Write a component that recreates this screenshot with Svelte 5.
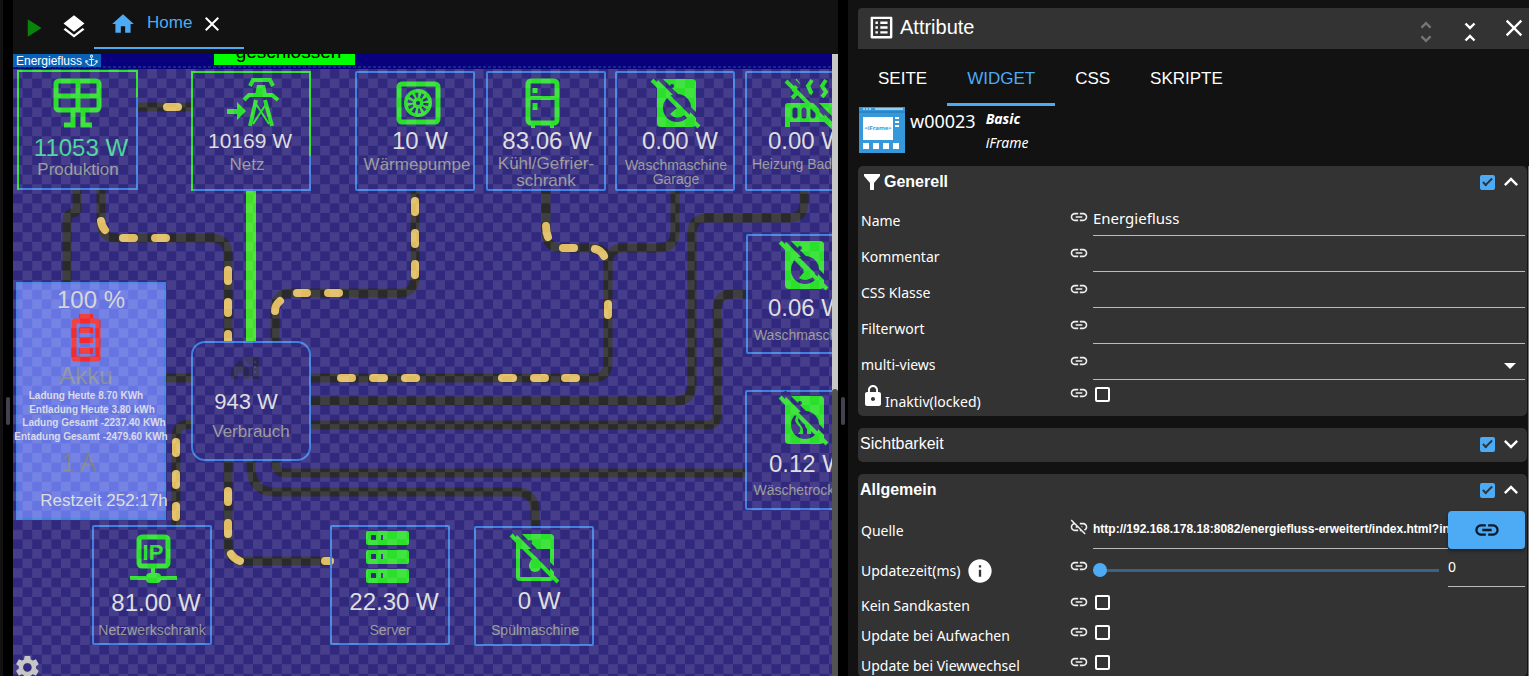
<script>
  let name = 'Energiefluss';
  let source = 'http://192.168.178.18:8082/energiefluss-erweitert/index.html?instance=0';
  let interval = 0;

  const tabs = ['SEITE', 'WIDGET', 'CSS', 'SKRIPTE'];
  let activeTab = 'WIDGET';

  // dark pipes between the nodes
  const wires = [
    'M137 107H192',
    'M77 189V206Q77 213 72 213Q67 214 67 221V284',
    'M101 189V222Q101 238 117 238H211Q228 238 228 255V342',
    'M415 190V277Q415 293 399 293H291Q275 293 275 309V342',
    'M546 190V232Q546 248 562 248H592Q608 248 608 264V362Q608 378 592 378H310',
    'M675 190V232Q675 248 659 248H624Q608 248 608 264',
    'M804 190V203Q804 218 789 218H707Q692 218 692 233V385Q692 401 676 401H310',
    'M747 294H732Q717 294 717 310V415Q717 425 707 425H310',
    'M746 473H286Q275 473 275 460',
    'M251 460V466Q251 492 275 492H517Q535 492 535 512V527',
    'M228 460V545Q228 561 244 561H331',
    'M192 424H190Q176 424 176 438V526',
    'M165 378H192'
  ];

  const pulses = [
    'M167 107H178',
    'M101 221Q102 227 105 230', 'M123 238H134', 'M155 238H166',
    'M228 270V281', 'M228 302V313', 'M228 334V340',
    'M415 201V212', 'M415 233V244', 'M415 264V275', 'M339 293H328', 'M307 293H297', 'M280 301Q275 305 275 311',
    'M546 226Q546 232 548 237', 'M563 248H574', 'M595 249Q601 250 604 256', 'M608 304V315',
    'M341 378H352', 'M373 378H384', 'M405 378H416', 'M502 378H513', 'M534 378H545', 'M565 378H576',
    'M176 442V453', 'M176 474V485', 'M176 506V517',
    'M228 491V502', 'M228 523V534', 'M231 554Q234 559 240 561', 'M325 561H330'
  ];

  const boxes = [
    { x: 356, y: 72 }, { x: 487, y: 72 }, { x: 616, y: 72 }, { x: 746, y: 72 },
    { x: 747, y: 235 }, { x: 746, y: 391 },
    { x: 93, y: 526 }, { x: 331, y: 526 }, { x: 475, y: 527 }
  ];

  const texts = [
    { t: '11053 W', x: 81, y: 156, s: 24, c: '#48d39a' },
    { t: 'Produktion', x: 78, y: 175, s: 17, c: '#979797' },
    { t: '10169 W', x: 250, y: 148, s: 21, c: '#dcdcdc' },
    { t: 'Netz', x: 247, y: 170, s: 17, c: '#979797' },
    { t: '10 W', x: 420, y: 149, s: 24, c: '#dcdcdc' },
    { t: 'Wärmepumpe', x: 417, y: 170, s: 17, c: '#979797' },
    { t: '83.06 W', x: 547, y: 149, s: 24, c: '#dcdcdc' },
    { t: 'Kühl/Gefrier-', x: 546, y: 169, s: 17, c: '#979797' },
    { t: 'schrank', x: 546, y: 186, s: 17, c: '#979797' },
    { t: '0.00 W', x: 680, y: 149, s: 24, c: '#dcdcdc' },
    { t: 'Waschmaschine', x: 676, y: 170, s: 14, c: '#979797' },
    { t: 'Garage', x: 676, y: 184, s: 14, c: '#979797' },
    { t: '0.00 W', x: 806, y: 149, s: 24, c: '#dcdcdc' },
    { t: 'Heizung Bad', x: 792, y: 169, s: 14, c: '#979797' },
    { t: '0.06 W', x: 806, y: 316, s: 24, c: '#dcdcdc' },
    { t: 'Waschmaschine', x: 805, y: 340, s: 14, c: '#979797' },
    { t: '0.12 W', x: 807, y: 472, s: 24, c: '#dcdcdc' },
    { t: 'Wäschetrockner', x: 804, y: 495, s: 14, c: '#979797' },
    { t: '100 %', x: 91, y: 308, s: 24, c: '#d4d4d4' },
    { t: 'Akku', x: 86, y: 384, s: 24, c: '#8a8f9c' },
    { t: '1 A', x: 79, y: 471, s: 24, c: '#7d828f' },
    { t: 'Restzeit 252:17h', x: 104, y: 506, s: 17, c: '#dcdcdc' },
    { t: '943 W', x: 246, y: 409, s: 22, c: '#dcdcdc' },
    { t: 'Verbrauch', x: 251, y: 437, s: 17, c: '#979797' },
    { t: '81.00 W', x: 156, y: 611, s: 24, c: '#dcdcdc' },
    { t: 'Netzwerkschrank', x: 152, y: 635, s: 14, c: '#979797' },
    { t: '22.30 W', x: 394, y: 610, s: 24, c: '#dcdcdc' },
    { t: 'Server', x: 390, y: 635, s: 14, c: '#979797' },
    { t: '0 W', x: 539, y: 609, s: 24, c: '#dcdcdc' },
    { t: 'Spülmaschine', x: 535, y: 635, s: 14, c: '#979797' }
  ];

  const counters = [
    { t: 'Ladung Heute 8.70 KWh', x: 86, y: 399 },
    { t: 'Entladung Heute 3.80 kWh', x: 92, y: 413 },
    { t: 'Ladung Gesamt -2237.40 KWh', x: 94, y: 426 },
    { t: 'Entadung Gesamt -2479.60 KWh', x: 91, y: 440 }
  ];

  const flags = ['Kein Sandkasten', 'Update bei Aufwachen', 'Update bei Viewwechsel'];
</script>

{#snippet link(off)}
  <svg class="link" viewBox="0 0 24 24" aria-hidden="true">
    {#if off}
      <path d="M14.400 11l1.600 1.600V11zM17 7h-4v1.900h4c1.710 0 3.100 1.390 3.100 3.100 0 1.430-.980 2.630-2.310 2.980l1.460 1.460C20.880 15.610 22 13.950 22 12c0-2.760-2.240-5-5-5zM2 4.270l3.110 3.110C3.290 8.120 2 9.910 2 12c0 2.760 2.240 5 5 5h4v-1.900H7c-1.710 0-3.100-1.390-3.100-3.100 0-1.590 1.210-2.900 2.760-3.070L8.730 11H8v2h2.730L13 15.270V17h1.730l4.010 4L20 19.740 3.270 3z" />
    {:else}
      <path d="M3.900 12c0-1.710 1.390-3.100 3.100-3.100h4V7H7c-2.760 0-5 2.240-5 5s2.240 5 5 5h4v-1.900H7c-1.710 0-3.100-1.390-3.100-3.100zM8 13h8v-2H8v2zm9-6h-4v1.900h4c1.710 0 3.100 1.390 3.100 3.100s-1.390 3.100-3.100 3.100h-4V17h4c2.760 0 5-2.240 5-5s-2.240-5-5-5z" />
    {/if}
  </svg>
{/snippet}

{#snippet chevron(up)}
  <svg class="chevron" viewBox="0 0 24 24" aria-hidden="true">
    <path d={up ? 'm12 8-6 6 1.410 1.410L12 10.830l4.590 4.580L18 14z' : 'M16.590 8.590 12 13.170 7.410 8.590 6 10l6 6 6-6z'} />
  </svg>
{/snippet}

{#snippet washer(x, y, kind)}
  <g transform="translate({x} {y})">
    <rect x="5" width="39" height="48" rx="4" fill="#2be02b" />
    <circle cx="20" cy="7" r="2" class="hole" />
    <circle cx="25" cy="29" r="14" class="hole" />
    {#if kind === 'dryer'}
      <path d="M17 19Q13 25 18 29T18 38H23Q24 33 20 28T20 21ZM25 25Q24 30 27 33V38H31Q32 33 29 30Z" fill="#2be02b" />
    {:else if kind === 'pie'}
      <path d="M13 20L24 31L19 37Q26 42 34 35L35 32L20 17Z" fill="#2be02b" />
      <path d="M14 19L24 29L17 35Q10 28 14 19Z" class="hole" />
    {:else}
      <path d="M15 19L25 29L18 35Q25 42 34 35L20 21Z" fill="#2be02b" />
      <path d="M14 20L23 29L16 35Z" class="hole" />
    {/if}
    <path d="M4 -4L46 38" class="gap" />
    <path d="M0 1L47 48" class="slash" />
  </g>
{/snippet}

<div class="app">
  <div class="edge"></div>
  <div class="splitter"><span></span></div>

  <main class="editor">
    <header class="toolbar">
      <button class="icon-btn play" aria-label="Start">
        <svg viewBox="0 0 24 24" width="30" height="30"><path d="M7 5v14l11-7z" fill="#0a830a" /></svg>
      </button>
      <button class="icon-btn layers" aria-label="Ansichten">
        <svg viewBox="0 0 24 24" width="28" height="28"><path fill="#fff" d="m11.990 18.540-7.370-5.730L3 14.070l9 7 9-7-1.630-1.270zM12 16l7.360-5.730L21 9l-9-7-9 7 1.630 1.270z" /></svg>
      </button>
      <div class="view-tab">
        <svg viewBox="0 0 24 24" width="26" height="26"><path fill="#4dabf5" d="M10 20v-6h4v6h5v-8h3L12 3 2 12h3v8z" /></svg>
        <a href="#home">Home</a>
        <button class="icon-btn" aria-label="Home schließen">
          <svg viewBox="0 0 24 24" width="24" height="24"><path fill="#fff" d="M19 6.410 17.590 5 12 10.590 6.410 5 5 6.410 10.590 12 5 17.590 6.410 19 12 13.410 17.590 19 19 17.590 13.410 12z" /></svg>
        </button>
      </div>
    </header>

    <div class="work">
      <div class="stage">
        <svg class="flow" width="840" height="622">
          <defs>
            <pattern id="checker" width="16" height="16" patternUnits="userSpaceOnUse" patternTransform="translate(13 69) scale(1.2)">
              <rect width="8" height="8" fill="#fff" />
              <rect x="8" y="8" width="8" height="8" fill="#fff" />
            </pattern>
          </defs>
          <g transform="translate(-13 -54)">
            <rect x="13" y="69" width="840" height="620" class="hole" />

            {#each wires as d}
              <path {d} class="wire" />
            {/each}
            {#each pulses as d}
              <path {d} class="pulse" />
            {/each}
            <path d="M251 190V342" stroke="#42e028" stroke-width="10" />

            {#each boxes as b}
              <rect x={b.x} y={b.y} width="118" height="118" rx="1" class="box" />
            {/each}
            <rect x="18" y="71" width="119" height="118" class="box" />
            <path d="M18 190V71H137V97" class="box-live" />
            <rect x="192" y="72" width="118" height="118" class="box" />
            <path d="M192 191V72H310V156" class="box-live" />
            <rect x="192" y="342" width="118" height="118" rx="13" class="box center" />
            <rect x="17" y="283" width="148" height="236" class="box akku" />

            <!-- Produktion -->
            <g fill="none" stroke="#2be02b" stroke-width="5">
              <rect x="56" y="81" width="43" height="29" rx="3" />
              <path d="M78 80V110M56 96H99M73 110V125H64M83 110V125H92" />
            </g>

            <!-- Netz -->
            <path d="M227 109H237V102L246 111L237 120V114H227Z" fill="#2be02b" />
            <g fill="none" stroke="#2be02b" stroke-width="4">
              <path d="M250 86L253 80H270L273 86M244 100L249 95H272L278 100" />
              <path d="M256 100L250 126M265 100L272 126" />
              <path d="M256 104L269 124M266 104L253 124" stroke-width="2" />
            </g>
            <path d="M257 85H265L267 95H255Z" fill="#2be02b" />

            <!-- Wärmepumpe -->
            <rect x="399" y="84" width="39" height="38" rx="3" fill="none" stroke="#2be02b" stroke-width="5" />
            <circle cx="418" cy="103" r="14" fill="#2be02b" />
            <circle cx="418" cy="103" r="8" fill="none" stroke="#31297e" stroke-width="5" stroke-dasharray="2.500 2.530" />
            <circle cx="418" cy="103" r="2" class="hole" />

            <!-- Kühlschrank -->
            <g fill="none" stroke="#2be02b" stroke-width="4">
              <rect x="528" y="81" width="29" height="42" rx="3" stroke-width="5" />
              <path d="M528 98H557M531 126H535M550 126H554" />
              <path d="M535 88V93M535 103V110" stroke-width="5" />
            </g>

            {@render washer(652, 79, 'water')}
            {@render washer(780, 241, 'pie')}
            {@render washer(780, 396, 'dryer')}

            <!-- Heizung -->
            <path d="M785 127V106Q785 103 788 103H836V127H829V122H790V127Z" fill="#2be02b" />
            <path d="M795 110V116M804 110V116M813 110V116M822 110V116" stroke="#31297e" stroke-width="5" stroke-linecap="round" />
            <path d="M795 80L798 84L794 90L797 93L792 98M812 80L808 86L811 92L808 97M826 80L822 86L826 92L822 97" fill="none" stroke="#2be02b" stroke-width="4" />
            <path d="M790 77L838 125" class="gap" />
            <path d="M786 81L834 129" class="slash" />

            <!-- Akku -->
            <g stroke="#f02c2c" fill="none">
              <rect x="74" y="321" width="24" height="38" rx="1" stroke-width="5" />
              <path d="M79 317H93" stroke-width="6" />
              <path d="M79 330H93M79 340H93M79 351H93" stroke-width="6" />
            </g>

            <!-- Verbrauch -->
            <path fill="#2a2650" d="M231 379V370L240 360L249 369V379H243V373H238V379ZM244 357H259V379H252V367L244 360Z" />
            <path d="M255 361V375" stroke="#3a3380" stroke-width="2" stroke-dasharray="2 3" />

            <!-- Netzwerkschrank -->
            <rect x="139" y="537" width="29" height="29" rx="3" fill="none" stroke="#2be02b" stroke-width="5" />
            <text x="153" y="560" class="ip">IP</text>
            <path d="M130 578H177M153 567V574" stroke="#2be02b" stroke-width="4" />
            <rect x="146" y="573" width="15" height="10" rx="4" fill="#2be02b" />

            <!-- Server -->
            {#each [531, 550, 569] as y}
              <rect x="366" {y} width="43" height="14" rx="2" fill="#2be02b" />
              <rect x="371" y={y + 4} width="5" height="5" class="hole" />
              <rect x="381" y={y + 4} width="2" height="5" class="hole" />
            {/each}

            <!-- Spülmaschine -->
            <rect x="518" y="536" width="34" height="43" rx="2" fill="none" stroke="#2be02b" stroke-width="4" />
            <path d="M517 536H553V549H517Z" fill="#2be02b" />
            <circle cx="530" cy="542" r="2" class="hole" />
            <path d="M535 556Q541 561 541 566A6 6 0 0 1 529 566Q529 561 535 556Z" fill="#2be02b" />
            <path d="M515 530L558 573" class="gap" />
            <path d="M511 535L558 582" class="slash" />

            {#each texts as t}
              <text x={t.x} y={t.y} font-size={t.s} fill={t.c}>{t.t}</text>
            {/each}
            {#each counters as c}
              <text x={c.x} y={c.y} class="counter">{c.t}</text>
            {/each}

            <rect x="13" y="69" width="840" height="620" fill="url(#checker)" opacity="0.1" />
            <path d="M13 67H853" stroke="#22509c" stroke-dasharray="3 2" />

            <!-- settings -->
            <path transform="translate(13 653) scale(1.2)" fill="#c6c6c6" d="M19.140 12.940c.040-.300.060-.610.060-.940 0-.320-.020-.640-.070-.940l2.030-1.580c.180-.140.230-.410.120-.610l-1.920-3.320c-.120-.220-.370-.290-.590-.220l-2.390.960c-.500-.380-1.030-.700-1.620-.940l-.360-2.540c-.040-.240-.240-.410-.480-.410h-3.840c-.240 0-.430.170-.470.410l-.360 2.540c-.590.240-1.130.570-1.620.940l-2.390-.960c-.220-.080-.470 0-.590.220L2.740 8.870c-.120.210-.080.470.120.610l2.030 1.580c-.050.300-.090.630-.090.940s.020.640.070.940l-2.030 1.580c-.180.140-.230.410-.120.610l1.920 3.320c.120.220.370.290.590.220l2.390-.960c.500.380 1.030.700 1.620.940l.360 2.540c.050.240.240.410.480.410h3.840c.240 0 .440-.170.470-.410l.360-2.540c.590-.240 1.130-.560 1.620-.940l2.390.960c.220.080.470 0 .590-.220l1.920-3.320c.120-.220.070-.470-.120-.610zM12 15.600c-1.980 0-3.600-1.620-3.600-3.600s1.620-3.600 3.600-3.600 3.600 1.620 3.600 3.600-1.620 3.600-3.600 3.600z" />
          </g>
        </svg>
        <div class="status"><span>geschlossen</span></div>
        <div class="widget-name">
          Energiefluss
          <svg viewBox="0 0 24 24" width="13" height="13" fill="none" stroke="#cfe6ff" stroke-width="2"><circle cx="12" cy="4" r="2" /><path d="M12 6V21M7 10H17M2 13Q4 21 12 21T22 13M1 16L2 12L6 14M23 16L22 12L18 14" /></svg>
        </div>
      </div>
      <div class="scroll"><div class="thumb"></div></div>
    </div>
  </main>

  <div class="splitter"><span></span></div>

  <aside class="panel">
    <header class="panel-head">
      <svg viewBox="0 0 24 24" width="29" height="29"><path fill="#fff" d="M19 5v14H5V5h14m1.100-2H3.900c-.500 0-.900.400-.900.900v16.200c0 .400.400.900.900.900h16.200c.400 0 .900-.500.900-.900V3.900c0-.500-.500-.900-.900-.900zM11 7h6v2h-6V7zm0 4h6v2h-6v-2zm0 4h6v2h-6zM7 7h2v2H7zm0 4h2v2H7zm0 4h2v2H7z" /></svg>
      <h1>Attribute</h1>
      <button class="icon-btn fold" aria-label="Alle öffnen" disabled>
        <svg viewBox="0 0 24 24" width="28" height="28"><path fill="#777" d="M12 5.830 15.170 9l1.410-1.410L12 3 7.410 7.590 8.830 9zm0 12.340L8.830 15l-1.410 1.410L12 21l4.590-4.590L15.170 15z" /></svg>
      </button>
      <button class="icon-btn fold" aria-label="Alle schließen">
        <svg viewBox="0 0 24 24" width="28" height="28"><path fill="#fff" d="M7.410 18.590 8.830 20 12 16.830 15.170 20l1.410-1.410L12 14zm9.180-13.180L15.170 4 12 7.170 8.830 4 7.410 5.410 12 10z" /></svg>
      </button>
      <button class="icon-btn" aria-label="Schließen">
        <svg viewBox="0 0 24 24" width="28" height="28"><path fill="#fff" d="M19 6.410 17.590 5 12 10.590 6.410 5 5 6.410 10.590 12 5 17.590 6.410 19 12 13.410 17.590 19 19 17.590 13.410 12z" /></svg>
      </button>
    </header>

    <nav class="tabs">
      {#each tabs as tab}
        <button class:active={tab === activeTab} on:click={() => (activeTab = tab)}>{tab}</button>
      {/each}
    </nav>

    <div class="widget-info">
      <svg viewBox="0 0 46 46" width="46" height="46">
        <rect width="46" height="46" fill="#3498db" />
        <path d="M0 5H46" stroke="#2474a8" />
        <path d="M4 2H12" stroke="#fff" stroke-dasharray="2 1" />
        <path d="M16 2H44" stroke="#fff" stroke-width="1" />
        <rect x="4" y="10" width="30" height="23" fill="#fff" />
        <text x="19" y="23" text-anchor="middle" font-size="6" font-weight="700" fill="#3498db">&lt;iFrame&gt;</text>
        <path d="M36 11H40M36 15H40M36 19H40" stroke="#fff" stroke-width="2" />
        <path d="M4 39H42" stroke="#fff" stroke-width="6" stroke-dasharray="6 4" />
      </svg>
      <span class="wid">w00023</span>
      <div class="wtype"><b>Basic</b><span>iFrame</span></div>
    </div>

    <div class="sections">
      <section>
        <div class="head">
          <svg viewBox="0 0 16 16" width="16" height="16"><path d="M0 0H16V2L10 9V16H6V9L0 2Z" fill="#fff" /></svg>
          <h2>Generell</h2>
          <input type="checkbox" aria-label="Generell" checked />
          <button class="icon-btn" aria-label="Zuklappen">{@render chevron(true)}</button>
        </div>
        <div class="row">
          <label for="name">Name</label>
          {@render link(false)}
          <input id="name" type="text" bind:value={name} />
        </div>
        <div class="row">
          <label for="comment">Kommentar</label>
          {@render link(false)}
          <input id="comment" type="text" />
        </div>
        <div class="row">
          <label for="css">CSS Klasse</label>
          {@render link(false)}
          <input id="css" type="text" />
        </div>
        <div class="row">
          <label for="filter">Filterwort</label>
          {@render link(false)}
          <input id="filter" type="text" />
        </div>
        <div class="row">
          <label for="views">multi-views</label>
          {@render link(false)}
          <div class="select">
            <select id="views"><option></option></select>
            <svg viewBox="0 0 12 6" width="12" height="6"><path d="M0 0H12L6 6Z" fill="#fff" /></svg>
          </div>
        </div>
        <div class="row check locked">
          <label for="locked">
            <svg viewBox="0 0 24 24" width="24" height="24"><path fill="#fff" d="M18 8h-1V6c0-2.760-2.240-5-5-5S7 3.240 7 6v2H6c-1.100 0-2 .900-2 2v10c0 1.100.900 2 2 2h12c1.100 0 2-.900 2-2V10c0-1.100-.900-2-2-2zm-6 9c-1.100 0-2-.900-2-2s.900-2 2-2 2 .900 2 2-.900 2-2 2zm3.100-9H8.900V6c0-1.710 1.390-3.100 3.100-3.100s3.100 1.390 3.100 3.100z" /></svg>
            <span>Inaktiv(locked)</span>
          </label>
          {@render link(false)}
          <input id="locked" type="checkbox" />
        </div>
      </section>

      <section>
        <div class="head">
          <h2 class="closed">Sichtbarkeit</h2>
          <input type="checkbox" aria-label="Sichtbarkeit" checked />
          <button class="icon-btn" aria-label="Aufklappen">{@render chevron(false)}</button>
        </div>
      </section>

      <section>
        <div class="head">
          <h2>Allgemein</h2>
          <input type="checkbox" aria-label="Allgemein" checked />
          <button class="icon-btn" aria-label="Zuklappen">{@render chevron(true)}</button>
        </div>
        <div class="row source">
          <label for="source">Quelle</label>
          {@render link(true)}
          <input id="source" type="text" bind:value={source} />
          <button class="pick" aria-label="Quelle wählen">{@render link(false)}</button>
        </div>
        <div class="row time">
          <label for="interval">
            Updatezeit(ms)
            <svg viewBox="0 0 24 24" width="28" height="28"><path fill="#fff" d="M12 2C6.480 2 2 6.480 2 12s4.480 10 10 10 10-4.480 10-10S17.520 2 12 2zm1 15h-2v-6h2zm0-8h-2V7h2z" /></svg>
          </label>
          {@render link(false)}
          <input id="interval" type="range" min="0" max="60000" bind:value={interval} />
          <input class="num" type="text" aria-label="Updatezeit" bind:value={interval} />
        </div>
        {#each flags as flag, i}
          <div class="row check">
            <label for="flag{i}">{flag}</label>
            {@render link(false)}
            <input id="flag{i}" type="checkbox" />
          </div>
        {/each}
      </section>
    </div>
  </aside>
</div>

<style>
  :global(body) {
    margin: 0;
    background: #121212;
  }
  .app {
    display: flex;
    height: 100vh;
    overflow: hidden;
    color: #fff;
    font-family: 'Liberation Sans', Arial, sans-serif;
  }
  .edge {
    width: 3px;
    background: #121212;
  }
  .splitter {
    width: 10px;
    flex-shrink: 0;
    display: flex;
    justify-content: center;
    padding-top: 397px;
    box-sizing: border-box;
    background: #000;
  }
  .splitter span {
    width: 4px;
    height: 28px;
    border-radius: 2px;
    background: #44414f;
  }
  .icon-btn {
    display: flex;
    padding: 0;
    border: none;
    background: none;
  }

  /* editor */
  .editor {
    flex: 825 1 0;
    min-width: 0;
    display: flex;
    flex-direction: column;
  }
  .toolbar {
    display: flex;
    align-items: center;
    height: 54px;
    padding-left: 6px;
    box-sizing: border-box;
    background: #121212;
  }
  .play {
    padding-top: 2px;
  }
  .layers {
    margin-left: 11px;
  }
  .view-tab {
    display: flex;
    align-items: center;
    gap: 7px;
    width: 150px;
    height: 49px;
    margin: 0 0 5px 6px;
    padding: 0 20px 0 16px;
    box-sizing: border-box;
    border-bottom: 2px solid #4dabf5;
  }
  .view-tab a {
    flex: 1;
    padding: 0 0 2px 4px;
    color: #4dabf5;
    font-size: 17px;
    text-decoration: none;
  }
  .work {
    flex: 1;
    min-height: 0;
    display: flex;
  }
  .stage {
    position: relative;
    flex: 1;
    overflow: hidden;
    background: #09007d;
  }
  .flow {
    display: block;
  }
  .flow text {
    text-anchor: middle;
  }
  .hole {
    fill: #31297e;
  }
  .wire {
    fill: none;
    stroke: #2a2a2a;
    stroke-width: 9;
  }
  .pulse {
    fill: none;
    stroke: #e0bd62;
    stroke-width: 8;
    stroke-linecap: round;
  }
  .box {
    fill: none;
    stroke: #4080e0;
    stroke-width: 2;
  }
  .box-live {
    fill: none;
    stroke: #2be02b;
    stroke-width: 2;
  }
  .center {
    fill: #31297e;
  }
  .akku {
    fill: #6675e2;
  }
  .slash {
    stroke: #2be02b;
    stroke-width: 4;
  }
  .gap {
    stroke: #31297e;
    stroke-width: 4;
  }
  .flow .ip {
    fill: #2be02b;
    font-size: 22px;
    font-weight: 700;
  }
  .flow .counter {
    fill: #d6d8e8;
    font-size: 10px;
    font-weight: 700;
  }
  .widget-name {
    position: absolute;
    top: 0;
    left: 0;
    display: flex;
    align-items: center;
    gap: 3px;
    height: 13px;
    padding: 0 3px;
    background: #0a62b8;
    font-size: 12px;
  }
  .status {
    position: absolute;
    top: 0;
    left: 201px;
    width: 141px;
    height: 11px;
    overflow: hidden;
    background: #0f0;
    color: #000;
    font-size: 19px;
    line-height: 20px;
    text-align: center;
  }
  .status span {
    display: block;
    margin: -12px 0 0 8px;
  }
  .scroll {
    width: 6px;
    padding-top: 335px;
    box-sizing: border-box;
    background: #c8c8c8;
  }
  .thumb {
    height: 100%;
    border-radius: 3px 3px 0 0;
    background: #525252;
  }

  /* attribute panel */
  .panel {
    flex: 671 1 0;
    min-width: 0;
    height: 100vh;
    padding: 8px 0 0 10px;
    box-sizing: border-box;
    overflow: hidden;
    background: #121212;
  }
  .panel-head {
    display: flex;
    align-items: center;
    height: 41px;
    padding: 0 1px 2px 9px;
    box-sizing: border-box;
    border-radius: 4px 0 0 0;
    background: #333;
  }
  h1 {
    flex: 1;
    margin: 0 0 0 4px;
    font-size: 20px;
    font-weight: 400;
  }
  .fold {
    margin: 8px 16px 0 0;
  }
  .tabs {
    display: flex;
    height: 57px;
  }
  .tabs button {
    height: 57px;
    padding: 6px 20px 0;
    border: none;
    border-bottom: 3px solid transparent;
    background: none;
    color: #fff;
    font: 17px 'Liberation Sans', Arial, sans-serif;
  }
  .tabs .active {
    border-color: #4dabf5;
    color: #4dabf5;
  }
  .widget-info {
    display: flex;
    height: 60px;
    padding: 1px 0 0 1px;
    box-sizing: border-box;
    font-family: 'Noto Sans', sans-serif;
  }
  .wid {
    margin: 2px 10px 0 5px;
    font-size: 18px;
    line-height: 24px;
  }
  .wtype {
    display: flex;
    flex-direction: column;
    font-size: 14px;
    font-style: italic;
    line-height: 24px;
  }
  .sections {
    display: flex;
    flex-direction: column;
    gap: 12px;
    padding-right: 1px;
    border-right: 1px solid #777;
  }
  section {
    border-radius: 5px;
    background: #333;
  }
  .head {
    display: flex;
    align-items: center;
    height: 34px;
    padding: 0 2px 2px;
    box-sizing: border-box;
  }
  .head > svg {
    margin: 0 4px;
  }
  h2 {
    flex: 1;
    margin: 0;
    font-size: 16px;
    font-weight: 700;
  }
  .closed {
    font-weight: 400;
  }
  .chevron {
    width: 28px;
    height: 28px;
    fill: #fff;
  }
  .row {
    display: flex;
    align-items: flex-end;
    height: 36px;
    padding: 0 2px 0 3px;
    font-family: 'Noto Sans', sans-serif;
    font-size: 14px;
  }
  .row label {
    width: 208px;
    flex-shrink: 0;
    padding-bottom: 5px;
    line-height: 20px;
  }
  .link {
    width: 20px;
    height: 20px;
    flex-shrink: 0;
    margin: 0 4px 9px 0;
    fill: #eee;
  }
  .row input[type='text'],
  select {
    flex: 1;
    min-width: 0;
    width: 100%;
    height: 33px;
    padding: 0 0 3px;
    box-sizing: border-box;
    border: none;
    border-bottom: 1px solid #bbb;
    border-radius: 0;
    outline: none;
    appearance: none;
    background: none;
    color: #fff;
    font: 15px 'Noto Sans', sans-serif;
  }
  .select {
    position: relative;
    flex: 1;
    display: flex;
  }
  .select svg {
    position: absolute;
    right: 9px;
    bottom: 11px;
  }
  input[type='checkbox'] {
    position: relative;
    width: 15px;
    height: 15px;
    margin: 0 2px;
    border: 2px solid #fff;
    border-radius: 2px;
    appearance: none;
  }
  input[type='checkbox']:checked {
    border-color: #4dabf5;
    background: #4dabf5;
  }
  input[type='checkbox']:checked::after {
    content: '';
    position: absolute;
    top: -1px;
    left: 3px;
    width: 3px;
    height: 8px;
    border: solid #333;
    border-width: 0 2px 2px 0;
    transform: rotate(45deg);
  }
  .row.check {
    align-items: center;
    height: 30px;
  }
  .check label {
    padding: 8px 0 0;
  }
  .check .link {
    margin-bottom: 0;
  }
  .row.locked {
    height: 36px;
    align-items: flex-start;
  }
  .locked label {
    display: flex;
    padding: 4px 0 0;
  }
  .locked label span {
    padding-top: 8px;
  }
  .locked .link {
    margin-top: 3px;
  }
  .locked input {
    margin-top: 7px;
  }
  .row.source {
    height: 41px;
  }
  .row.source label {
    padding-bottom: 8px;
  }
  .source .link {
    margin-bottom: 12px;
  }
  .row.source input {
    height: 40px;
    padding: 0;
    font: 700 12px 'Liberation Sans', Arial, sans-serif;
  }
  .pick {
    display: flex;
    align-items: center;
    justify-content: center;
    width: 77px;
    height: 38px;
    flex-shrink: 0;
    padding: 0;
    border: none;
    border-radius: 4px;
    background: #4dabf5;
    box-shadow: 0 2px 4px #0006;
  }
  .pick .link {
    width: 28px;
    height: 28px;
    margin: 0;
    fill: #0b1a28;
  }
  .row.time {
    height: 38px;
  }
  .time label {
    display: flex;
    align-items: center;
    gap: 6px;
    padding-bottom: 2px;
  }
  .time .link {
    margin-bottom: 11px;
  }
  input[type='range'] {
    flex: 1;
    min-width: 0;
    height: 14px;
    margin: 0 9px 10px 0;
    appearance: none;
    background: linear-gradient(#3d6283, #3d6283) center / 100% 3px no-repeat;
  }
  input[type='range']::-webkit-slider-thumb {
    width: 14px;
    height: 14px;
    border-radius: 50%;
    appearance: none;
    background: #4dabf5;
  }
  .row .num[type='text'] {
    flex: 0 0 77px;
    height: 38px;
    padding-bottom: 3px;
    font-size: 14px;
  }
</style>
